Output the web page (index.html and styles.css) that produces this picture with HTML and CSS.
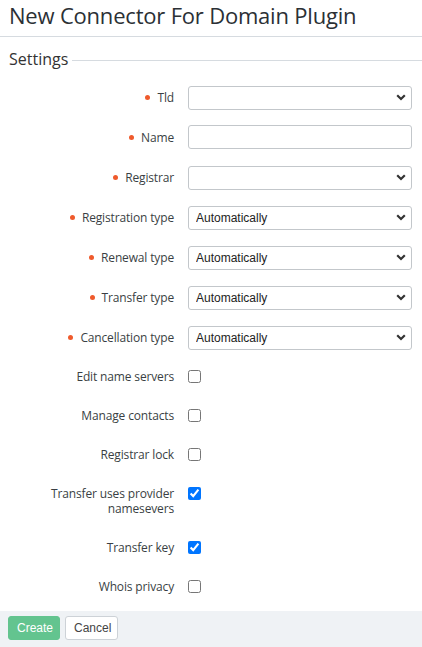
FILE: index.html
```html
<!DOCTYPE html>
<html lang="en">
<head>
<meta charset="utf-8">
<title>New Connector For Domain Plugin</title>
<link rel="stylesheet" href="styles.css">
</head>
<body>
<header class="page-header">
  <h1 class="page-title">New Connector For Domain Plugin</h1>
</header>
<section class="settings">
  <div class="section-head">
    <h2 class="section-title">Settings</h2>
    <div class="section-line"></div>
  </div>
  <div class="form">
    <div class="row">
      <label class="label required">Tld</label>
      <div class="control"><div class="select-wrap"><select class="select"><option></option></select><svg class="chev" viewBox="0 0 10 7" width="10" height="7"><path d="M1.2 1.2 L5 5 L8.8 1.2" fill="none" stroke="#333" stroke-width="2.2"/></svg></div></div>
    </div>
    <div class="row">
      <label class="label required">Name</label>
      <div class="control"><input class="input" type="text"></div>
    </div>
    <div class="row">
      <label class="label required">Registrar</label>
      <div class="control"><div class="select-wrap"><select class="select"><option></option></select><svg class="chev" viewBox="0 0 10 7" width="10" height="7"><path d="M1.2 1.2 L5 5 L8.8 1.2" fill="none" stroke="#333" stroke-width="2.2"/></svg></div></div>
    </div>
    <div class="row">
      <label class="label required">Registration type</label>
      <div class="control"><div class="select-wrap"><select class="select"><option>Automatically</option></select><svg class="chev" viewBox="0 0 10 7" width="10" height="7"><path d="M1.2 1.2 L5 5 L8.8 1.2" fill="none" stroke="#333" stroke-width="2.2"/></svg></div></div>
    </div>
    <div class="row">
      <label class="label required">Renewal type</label>
      <div class="control"><div class="select-wrap"><select class="select"><option>Automatically</option></select><svg class="chev" viewBox="0 0 10 7" width="10" height="7"><path d="M1.2 1.2 L5 5 L8.8 1.2" fill="none" stroke="#333" stroke-width="2.2"/></svg></div></div>
    </div>
    <div class="row">
      <label class="label required">Transfer type</label>
      <div class="control"><div class="select-wrap"><select class="select"><option>Automatically</option></select><svg class="chev" viewBox="0 0 10 7" width="10" height="7"><path d="M1.2 1.2 L5 5 L8.8 1.2" fill="none" stroke="#333" stroke-width="2.2"/></svg></div></div>
    </div>
    <div class="row">
      <label class="label required">Cancellation type</label>
      <div class="control"><div class="select-wrap"><select class="select"><option>Automatically</option></select><svg class="chev" viewBox="0 0 10 7" width="10" height="7"><path d="M1.2 1.2 L5 5 L8.8 1.2" fill="none" stroke="#333" stroke-width="2.2"/></svg></div></div>
    </div>
    <div class="row check-row">
      <label class="label">Edit name servers</label>
      <div class="control"><input class="check" type="checkbox"></div>
    </div>
    <div class="row check-row">
      <label class="label">Manage contacts</label>
      <div class="control"><input class="check" type="checkbox"></div>
    </div>
    <div class="row check-row">
      <label class="label">Registrar lock</label>
      <div class="control"><input class="check" type="checkbox"></div>
    </div>
    <div class="row check-row">
      <label class="label">Transfer uses provider namesevers</label>
      <div class="control"><input class="check" type="checkbox" checked></div>
    </div>
    <div class="row check-row">
      <label class="label">Transfer key</label>
      <div class="control"><input class="check" type="checkbox" checked></div>
    </div>
    <div class="row check-row">
      <label class="label">Whois privacy</label>
      <div class="control"><input class="check" type="checkbox"></div>
    </div>
  </div>
</section>
<footer class="actions">
  <button class="btn btn-primary" type="button">Create</button>
  <button class="btn btn-default" type="button">Cancel</button>
</footer>
</body>
</html>
```

FILE: styles.css
```css
* { box-sizing: border-box; }
html, body { margin: 0; padding: 0; background: #fff; }
body {
  width: 422px;
  height: 647px;
  overflow: hidden;
  font-family: "Open Sans", "Liberation Sans", sans-serif;
  color: #333;
}
.page-header {
  height: 37px;
  border-bottom: 1px solid #d6dbe0;
  padding: 0 9px;
}
.page-title {
  margin: 0;
  font-size: 22px;
  font-weight: 400;
  line-height: 30px;
  color: #2b3035;
  letter-spacing: -0.2px;
}
.section-head {
  display: flex;
  align-items: center;
  gap: 4px;
  margin-top: 11px;
  padding-left: 9px;
  height: 22px;
}
.section-title {
  margin: 0;
  font-size: 16px;
  font-weight: 400;
  line-height: 22px;
  color: #333;
}
.section-line {
  flex: 1;
  height: 1px;
  background: #d6dbe0;
  margin-top: 2px;
}
.form {
  margin-top: 15px;
  display: flex;
  flex-direction: column;
  gap: 16px;
  padding: 0 10px 0 8px;
}
.row {
  display: grid;
  grid-template-columns: 166px 224px;
  column-gap: 14px;
  align-items: center;
  min-height: 24px;
}
.label {
  text-align: right;
  font-size: 12px;
  line-height: 15px;
  color: #3a3f44;
  letter-spacing: -0.15px;
}
.label.required::before {
  content: "";
  display: inline-block;
  width: 5px;
  height: 5px;
  border-radius: 50%;
  background: #ef5a2c;
  margin-right: 7px;
  vertical-align: 2px;
}
.control { display: flex; align-items: center; }
.select-wrap {
  position: relative;
  width: 224px;
  height: 24px;
}
.select {
  appearance: none;
  -webkit-appearance: none;
  width: 100%;
  height: 24px;
  margin: 0;
  border: 1px solid #c3c7cb;
  border-radius: 3px;
  background: #fff;
  padding: 0 20px 0 7px;
  font-family: "Liberation Sans", Arial, sans-serif;
  font-size: 12px;
  color: #222;
}
.chev {
  position: absolute;
  right: 6px;
  top: 9px;
  pointer-events: none;
}
.input {
  width: 224px;
  height: 24px;
  margin: 0;
  border: 1px solid #c3c7cb;
  border-radius: 3px;
  padding: 0 7px;
  font-family: "Liberation Sans", Arial, sans-serif;
  font-size: 12px;
}
.check-row {
  min-height: 23px;
  align-items: start;
}
.check-row .label { padding: 4px 0; }
.check {
  width: 13px;
  height: 13px;
  margin: 5px 0 0 0;
}
.actions {
  position: absolute;
  left: 0;
  top: 611px;
  width: 422px;
  height: 36px;
  background: #eff2f5;
  padding: 5px 8px;
  display: flex;
  gap: 5px;
}
.btn {
  height: 24px;
  margin: 0;
  font-family: "Liberation Sans", Arial, sans-serif;
  font-size: 12px;
  border-radius: 3px;
  padding: 0 8px;
}
.btn-primary {
  width: 52px;
  background: #63c48f;
  border: 1px solid #63c48f;
  color: #fff;
}
.btn-default {
  width: 53px;
  background: #fff;
  border: 1px solid #cdd2d7;
  color: #444;
}
```
